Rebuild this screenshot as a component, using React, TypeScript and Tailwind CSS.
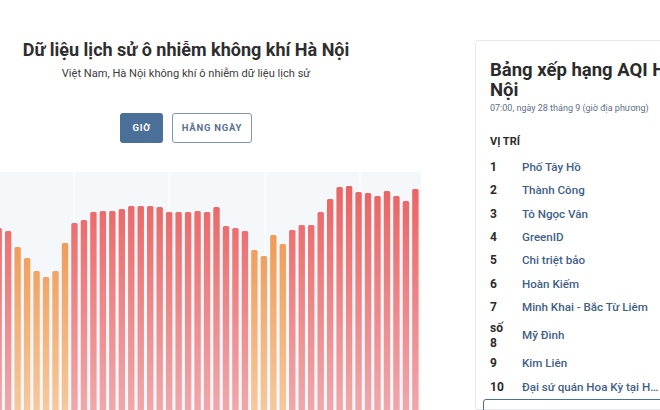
const tops = [
  228, 231, 247, 258, 271, 277, 271, 243, 223, 220, 212, 211, 211, 209, 206,
  206, 206, 207, 212, 212, 212, 211, 212, 207, 226, 228, 231, 250, 256, 235,
  244, 230, 225, 225, 212, 199, 187, 186, 192, 193, 196, 191, 196, 201, 189,
];
const orange = new Set([2, 3, 4, 5, 6, 7, 27, 28, 29, 30]);

const ranking = [
  { n: "1", name: "Phố Tây Hồ" },
  { n: "2", name: "Thành Công" },
  { n: "3", name: "Tô Ngọc Vân" },
  { n: "4", name: "GreenID" },
  { n: "5", name: "Chi triệt bảo" },
  { n: "6", name: "Hoàn Kiếm" },
  { n: "7", name: "Minh Khai - Bắc Từ Liêm" },
  { n: "số 8", name: "Mỹ Đình" },
  { n: "9", name: "Kim Liên" },
  { n: "10", name: "Đại sứ quán Hoa Kỳ tại Hà Nội" },
];

function HistoryChart() {
  const top0 = 172;
  return (
    <svg width="421" height="238" viewBox="0 0 421 238" className="block">
      <defs>
        <linearGradient id="red" x1="0" y1="10" x2="0" y2="238" gradientUnits="userSpaceOnUse">
          <stop offset="0" stopColor="#ea6262" />
          <stop offset="1" stopColor="#f0a7aa" />
        </linearGradient>
        <linearGradient id="org" x1="0" y1="60" x2="0" y2="238" gradientUnits="userSpaceOnUse">
          <stop offset="0" stopColor="#ef9a55" />
          <stop offset="1" stopColor="#f6c89c" />
        </linearGradient>
      </defs>
      <rect x="0" y="0" width="421" height="238" fill="#f5f8fa" />
      {[74, 169, 265, 360].map((x) => (
        <line key={x} x1={x} y1="0" x2={x} y2="238" stroke="#ffffff" strokeWidth="1" />
      ))}
      {tops.map((t, i) => (
        <rect
          key={i}
          x={-4.5 + i * 9.47}
          y={t - top0}
          width="6.4"
          height={260}
          rx="1.5"
          fill={orange.has(i) ? "url(#org)" : "url(#red)"}
        />
      ))}
    </svg>
  );
}

export default function App() {
  return (
    <div
      className="w-[660px] h-[410px] overflow-hidden bg-white flex"
      style={{ fontFamily: 'Roboto, "Liberation Sans", Arial, sans-serif' }}
    >
      <div className="w-[421px] shrink-0 flex flex-col">
        <div className="w-[372px] text-center pt-[38px]">
          <h1 className="text-[18px] leading-[24px] font-bold text-[#2e2e2e]">
            Dữ liệu lịch sử ô nhiễm không khí Hà Nội
          </h1>
          <p className="text-[11.1px] leading-[16px] text-[#3c3c3c] mt-[4px]">
            Việt Nam, Hà Nội không khí ô nhiễm dữ liệu lịch sử
          </p>
          <div className="flex justify-center gap-[9px] mt-[31px]">
            <button className="w-[43px] h-[30px] rounded-[3px] bg-[#4a6f98] text-white text-[9.5px] font-bold tracking-[0.08em]">
              GIỜ
            </button>
            <button className="w-[80px] h-[30px] rounded-[3px] bg-white border border-[#7d97b6] text-[#5a7091] text-[9.5px] font-bold tracking-[0.08em]">
              HẰNG NGÀY
            </button>
          </div>
        </div>
        <div className="mt-[29px]">
          <HistoryChart />
        </div>
      </div>

      <div className="ml-[54px] mt-[40px] w-[250px] shrink-0 border border-[#e4e7eb] rounded-[3px] pl-[14px] pt-[19px]">
        <h2 className="text-[18.5px] leading-[20px] font-bold text-[#2b2b2b]">
          <span className="block whitespace-nowrap">Bảng xếp hạng AQI Hà</span>
          <span className="block">Nội</span>
        </h2>
        <div className="text-[9px] leading-[12px] text-[#5d6f85] mt-[2px]">
          07:00, ngày 28 tháng 9 (giờ địa phương)
        </div>
        <div className="text-[11px] font-bold text-[#2b2b2b] mt-[21px] leading-[14px]">
          VỊ TRÍ
        </div>
        <div className="mt-[7px]">
          {ranking.map((r) => (
            <div key={r.n} className="flex items-center min-h-[23.3px] py-[1.5px] leading-[15px]">
              <div className="w-[22px] mr-[10px] text-[12px] font-bold text-[#2b2b2b]">{r.n}</div>
              <div className="w-[140px] truncate text-[11.6px] font-medium text-[#3f5f87]">
                {r.name}
              </div>
            </div>
          ))}
        </div>
        <div className="-ml-[7px] mt-[0px] h-[30px] border border-[#4a6f98] rounded-[3px]" />
      </div>
    </div>
  );
}
